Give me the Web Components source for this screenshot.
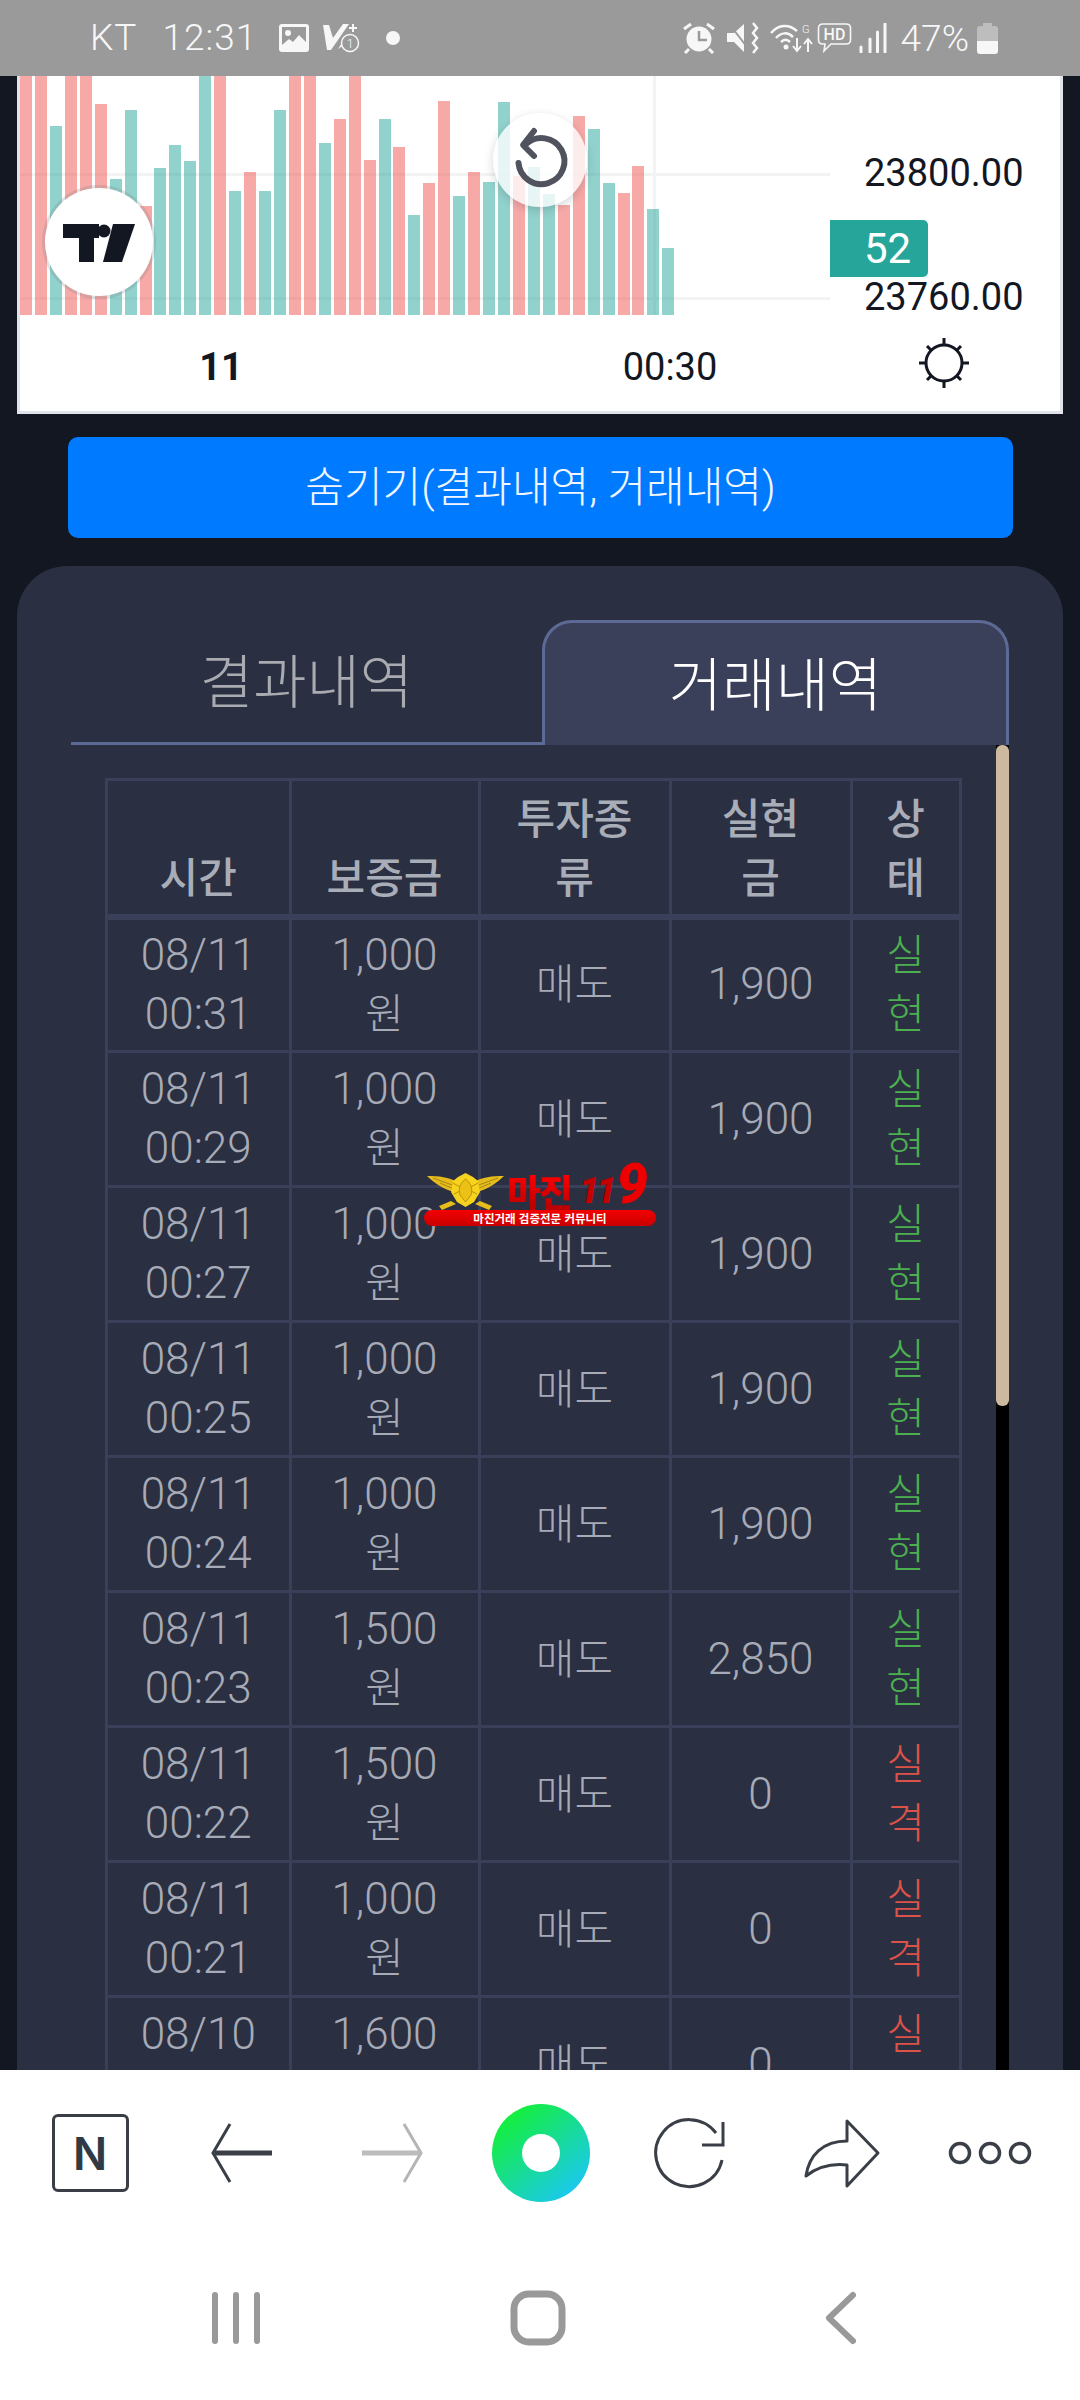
<!DOCTYPE html>
<html lang="ko">
<head>
<meta charset="utf-8">
<title>거래내역</title>
<style>
  html, body { margin: 0; padding: 0; height: 2400px; overflow: hidden; background: #131722; }
  body { font-family: Roboto, "Noto Sans CJK KR", sans-serif; }
</style>
</head>
<body>
<app-shell>
  <status-bar slot="top"></status-bar>
  <trade-chart></trade-chart>
  <hide-button>숨기기(결과내역, 거래내역)</hide-button>
  <trade-panel>
    <tab-item slot="tabs" style="flex: none; width: 471px">결과내역</tab-item>
    <tab-item slot="tabs" active>거래내역</tab-item>
    <trade-table></trade-table>
  </trade-panel>
  <site-stamp></site-stamp>
  <browser-bar slot="bottom"></browser-bar>
  <nav-bar slot="bottom"></nav-bar>
</app-shell>

<script>
const KR = `Roboto, "Noto Sans CJK KR", sans-serif`

class AppShell extends HTMLElement {
  constructor() {
    super()
    this.attachShadow({ mode: 'open' }).innerHTML = `
      <style>
        :host { display: flex; flex-direction: column; width: 1080px; height: 2400px; overflow: hidden; background: #131722; }
        main { position: relative; flex: 1; min-height: 0; overflow: hidden; display: flex; flex-direction: column; }
      </style>
      <slot name="top"></slot>
      <main><slot></slot></main>
      <slot name="bottom"></slot>`
  }
}

class StatusBar extends HTMLElement {
  constructor() {
    super()
    this.attachShadow({ mode: 'open' }).innerHTML = `
      <style>
        :host { display: flex; align-items: center; height: 76px; padding-left: 90px; padding-right: 82px; background: #9a9a9a; color: #f7f7f7;
          font: 300 37px/44px Roboto, sans-serif; box-sizing: border-box; }
        .left, .right { display: flex; align-items: center; }
        .right { margin-left: auto; }
        svg { display: block; flex: none; }
        .kt { letter-spacing: 1px; }
        .time { margin-left: 25px; letter-spacing: 1px; margin-right: 22px; }
        .pct { margin: 2px 8px 0 14px; }
      </style>
      <div class="left">
        <span class="kt">KT</span><span class="time">12:31</span>
        <svg width="30" height="28" viewBox="0 0 30 28"><rect width="30" height="28" rx="3" fill="#f7f7f7"/><rect x="3" y="3" width="24" height="20" fill="#9a9a9a"/><circle cx="9" cy="9" r="3" fill="#f7f7f7"/><path d="M3 23 L3 21 L10 15 L14 18 L20 11 L27 18 L27 23Z" fill="#f7f7f7"/></svg>
        <svg style="margin-left:14px" width="37" height="30" viewBox="0 0 37 30"><path d="M0 2H6L10 15L20 1H26L8 27H4Z" fill="#f7f7f7"/><path d="M15 26 L24 12 L24 20Z" fill="#f7f7f7"/><path d="M30 1v8M26 5h8" stroke="#f7f7f7" stroke-width="2"/><circle cx="27" cy="20" r="8.5" fill="#9a9a9a" stroke="#f7f7f7" stroke-width="1.5"/><text x="27" y="25" font-size="13" text-anchor="middle" fill="#f7f7f7" font-family="Roboto">1</text></svg>
        <svg style="margin-left:26px" width="14" height="14" viewBox="0 0 14 14"><circle cx="7" cy="7" r="7" fill="#f7f7f7"/></svg>
      </div>
      <div class="right">
        <svg width="34" height="32" viewBox="0 0 34 32"><circle cx="17" cy="17" r="12.5" fill="#f7f7f7"/><path d="M17 9v9h8" fill="none" stroke="#9a9a9a" stroke-width="2.5"/><path d="M2 7L9 2M32 7L25 2M7 27L3 31M27 27L31 31" stroke="#f7f7f7" stroke-width="3"/></svg>
        <svg style="margin-left:11px" width="32" height="32" viewBox="0 0 32 32"><path d="M0 11H7L17 2V30L7 20H0Z" fill="#f7f7f7"/><path d="M3 3L20 25" stroke="#9a9a9a" stroke-width="2"/><path d="M26 1l4 5-4 5 4 5-4 5 4 5-4 5" fill="none" stroke="#f7f7f7" stroke-width="2.5"/></svg>
        <svg style="margin-left:11px" width="43" height="32" viewBox="0 0 43 32"><path d="M1 11C9 2 19 2 27 9M6 16C11 10 18 10 23 15M11 20C14 17 17 17 20 20" fill="none" stroke="#f7f7f7" stroke-width="2.5"/><circle cx="16" cy="25" r="2.5" fill="#f7f7f7"/><text x="32" y="11" font-size="11" fill="#f7f7f7" font-family="Roboto">G</text><path d="M27 16v12m-4-4l4 5 4-5M38 30V18m-4 4l4-5 4 5" fill="none" stroke="#f7f7f7" stroke-width="2"/></svg>
        <svg style="margin-left:4px" width="35" height="32" viewBox="0 0 35 32"><path d="M6 2H29C32 2 33.500 3.500 33.500 6V18C33.500 21 32 22 29 22H14L7 29L8 22H6C3 22 1.500 21 1.500 18V6C1.500 3.500 3 2 6 2Z" fill="none" stroke="#f7f7f7" stroke-width="1.600"/><text x="17.500" y="18" font-size="16" font-weight="500" text-anchor="middle" fill="#f7f7f7" font-family="Roboto">HD</text></svg>
        <svg style="margin-left:7px" width="28" height="30" viewBox="0 0 28 30"><path d="M2 24v5M11 16v13M18.500 9v20M26 1v28" stroke="#f7f7f7" stroke-width="3" stroke-linecap="round"/></svg>
        <span class="pct">47%</span>
        <svg width="21" height="31" viewBox="0 0 21 31"><path d="M6 0H15V3H18Q21 3 21 6V18H0V6Q0 3 3 3H6Z" fill="#bdbdbd"/><path d="M0 18H21V28Q21 31 18 31H3Q0 31 0 28Z" fill="#f7f7f7"/></svg>
      </div>`
  }
}

const BARS = 'r239 r239 g189 r239 r239 r211 g136 g205 r109 g147 g170 g154 g239 r239 g124 r143 g124 g205 r239 r239 g172 r196 r239 r155 g196 r168 g100 r132 r214 g119 r143 g133 g213 r139 g148 g121 r110 r199 g186 g132 r122 r149 g106 g67'.split(' ')

class TradeChart extends HTMLElement {
  constructor() {
    super()
    const bars = BARS.map(b => `<i class="${b[0]}" style="height:${b.slice(1)}px"></i>`).join('')
    this.attachShadow({ mode: 'open' }).innerHTML = `
      <style>
        :host { display: block; flex: none; box-sizing: border-box; margin: 0 17px; width: 1046px; height: 338px; background: #fff;
          border: 3px solid #e0e3eb; border-top: 0; color: #131722; font: 400 38px/44px Roboto, sans-serif; }
        .top { display: flex; height: 239px; }
        .plot { position: relative; flex: none; width: 810px; overflow: hidden; display: flex; align-items: flex-end; gap: 2.95px; }
        .plot i { flex: none; width: 12px; position: relative; }
        .r { background: rgba(239, 83, 80, .5); }
        .g { background: rgba(38, 166, 154, .5); }
        .h, .v { position: absolute; background: #f2f3f3; }
        .h { left: 0; right: 0; height: 3px; }
        .v { top: 0; bottom: 0; left: 633px; width: 3px; }
        .logo, .reset { position: absolute; border-radius: 50%; z-index: 2; }
        .logo { left: 25px; top: 112px; width: 108px; height: 108px; background: #fff; box-shadow: 0 0 0 3px rgba(120, 123, 134, .22); }
        .reset { left: 473px; top: 37px; width: 94px; height: 94px; background: rgba(255, 255, 255, .78); box-shadow: 0 3px 10px rgba(19, 23, 34, .18); }
        .logo svg, .reset svg { display: block; }
        .axis { flex: 1; display: flex; flex-direction: column; padding-top: 75px; }
        .axis span { flex: none; padding-left: 34px; }
        .badge { flex: none; width: 98px; height: 57px; margin: 25px 0 -2px; padding-left: 34px; box-sizing: border-box; background: #26a69a; color: #fff; border-radius: 0 5px 5px 0;
          font-size: 42px; display: flex; align-items: center; }
        .time { display: grid; grid-template-columns: 402px 496px 52px; height: 96px; align-items: center; justify-items: center; }
        .time b { font-weight: 700; padding-top: 8px; }
        .time span { padding-top: 8px; }
        .time svg { display: block; }
      </style>
      <div class="top">
        <div class="plot">
          <div class="h" style="top:97px"></div>
          <div class="h" style="top:221px"></div>
          <div class="v"></div>
          ${bars}
          <div class="logo"><svg width="108" height="108" viewBox="0 0 108 108"><path d="M18 36H54V50H49V74H34V50H18Z" fill="#131722"/><circle cx="59" cy="43" r="6.500" fill="#131722"/><path d="M68 36H90L77 74H58Z" fill="#131722"/></svg></div>
          <div class="reset"><svg width="94" height="94" viewBox="0 0 94 94"><path d="M33 31A23 23 0 1 1 25.500 50" fill="none" stroke="#50535e" stroke-width="6" stroke-linecap="round"/><path d="M41 18L30 32L41 43" fill="none" stroke="#50535e" stroke-width="6" stroke-linecap="round" stroke-linejoin="round"/></svg></div>
        </div>
        <div class="axis">
          <span>23800.00</span>
          <div class="badge">52</div>
          <span>23760.00</span>
        </div>
      </div>
      <div class="time">
        <b>11</b>
        <span>00:30</span>
        <svg width="50" height="52" viewBox="0 0 50 52"><circle cx="25" cy="26" r="18" fill="none" stroke="#131722" stroke-width="3"/><path d="M25 1v7M25 44v7M0 26h7M43 26h7M8 9l5 5M42 9l-5 5M8 43l5-5M42 43l-5-5" stroke="#131722" stroke-width="3"/></svg>
      </div>`
  }
}

class HideButton extends HTMLElement {
  constructor() {
    super()
    this.attachShadow({ mode: 'open' }).innerHTML = `
      <style>
        :host { display: flex; flex: none; align-items: center; justify-content: center; box-sizing: border-box; width: 945px; height: 101px; margin: 23px 0 0 68px;
          background: #007bff; color: #f2f7ff; border-radius: 10px; font: 300 42px/56px ${KR}; }
      </style>
      <slot></slot>`
  }
}

class TabItem extends HTMLElement {
  constructor() {
    super()
    this.attachShadow({ mode: 'open' }).innerHTML = `
      <style>
        :host { display: flex; flex: 1; align-items: center; justify-content: center; box-sizing: border-box; height: 125px; padding-top: 3px; color: #a9abb1;
          font: 300 58px/70px ${KR}; border-bottom: 3px solid #5c6a95; }
        :host([active]) { color: #fff; background: #3a4059; border: 3px solid #5c6a95; border-bottom: 0; border-radius: 30px 30px 0 0; }
      </style>
      <slot></slot>`
  }
}

class TradePanel extends HTMLElement {
  constructor() {
    super()
    this.attachShadow({ mode: 'open' }).innerHTML = `
      <style>
        :host { display: block; flex: none; box-sizing: border-box; width: 1046px; margin: 28px 0 0 17px; padding: 54px 54px 0 54px; background: #2a2f41; border-radius: 50px 50px 0 0; }
        .tabs { display: flex; }
        .body { display: flex; align-items: stretch; }
        .content { padding: 33px 0 0 34px; }
        .rail { margin-left: auto; width: 13px; flex: none; background: #000; }
        .thumb { height: 661px; background: #cdb9a0; border-radius: 6px; }
      </style>
      <div class="tabs"><slot name="tabs"></slot></div>
      <div class="body">
        <div class="content"><slot></slot></div>
        <div class="rail"><div class="thumb"></div></div>
      </div>`
  }
}

const ROWS = [
  ['08/11', '00:31', '1,000', '1,900', 'win'],
  ['08/11', '00:29', '1,000', '1,900', 'win'],
  ['08/11', '00:27', '1,000', '1,900', 'win'],
  ['08/11', '00:25', '1,000', '1,900', 'win'],
  ['08/11', '00:24', '1,000', '1,900', 'win'],
  ['08/11', '00:23', '1,500', '2,850', 'win'],
  ['08/11', '00:22', '1,500', '0', 'lose'],
  ['08/11', '00:21', '1,000', '0', 'lose'],
  ['08/10', '&nbsp;', '1,600', '0', 'lose']
]

class TradeTable extends HTMLElement {
  constructor() {
    super()
    const rows = ROWS.map(([date, time, amount, result, state]) => `
      <tr>
        <td>${date}<br>${time}</td>
        <td>${amount}<br><span class="kr">원</span></td>
        <td class="kr">매도</td>
        <td>${result}</td>
        <td class="kr ${state}">${state == 'win' ? '실<br>현' : '실<br>격'}</td>
      </tr>`).join('')
    this.attachShadow({ mode: 'open' }).innerHTML = `
      <style>
        :host { display: block; width: 856px; }
        table { border-collapse: collapse; table-layout: fixed; width: 856px; color: #a6abb7; font: 300 44px/59px ${KR}; text-align: center; }
        th, td { border: 3px solid #3a4059; padding: 6px 0; }
        th { font: 500 42px/59px ${KR}; vertical-align: bottom; border-bottom-width: 6px; color: #a8adb8; }
        td { vertical-align: middle; }
        thead tr { height: 137px; }
        tbody tr { height: 135px; }
        .kr { font-size: 42px; }
        .win { color: #4caf50; }
        .lose { color: #dc5248; }
      </style>
      <table>
        <colgroup><col style="width:183.500px"><col style="width:189px"><col style="width:191px"><col style="width:181px"><col style="width:109px"></colgroup>
        <thead><tr><th>시간</th><th>보증금</th><th>투자종<br>류</th><th>실현<br>금</th><th>상<br>태</th></tr></thead>
        <tbody>${rows}</tbody>
      </table>`
  }
}

class SiteStamp extends HTMLElement {
  constructor() {
    super()
    this.attachShadow({ mode: 'open' }).innerHTML = `
      <style>
        :host { position: absolute; left: 424px; top: 1097px; width: 232px; display: block; font-family: "Noto Sans CJK KR", sans-serif; }
        .top { display: flex; align-items: flex-end; height: 37px; }
        svg { display: block; flex: none; margin-left: 3px; }
        .name { margin-left: 3px; font: 900 37px/37px "Noto Sans CJK KR", sans-serif; letter-spacing: -2px; background: linear-gradient(#ff0000, #b80000); -webkit-background-clip: text; background-clip: text; color: transparent; }
        .num { margin-left: 8px; font: italic 900 56px/37px Roboto, sans-serif; color: #ee0000; letter-spacing: -1px; white-space: nowrap; }
        .num small { font-size: 36px; color: #c40000; letter-spacing: -3px; margin-right: 3px; }
        .bar { height: 16px; background: linear-gradient(#f40000, #c80000); border-radius: 8px; color: #fff; font: 700 11.500px/16px "Noto Sans CJK KR", sans-serif; text-align: center; white-space: nowrap; }
      </style>
      <div class="top">
        <svg width="77" height="37" viewBox="0 0 77 37">
          <path d="M0 3C12 3 22 4 30 9L27 19C16 16 7 10 0 3ZM77 3C65 3 55 4 47 9L50 19C61 16 70 10 77 3Z" fill="#e6bb1c"/>
          <path d="M6 5L28 13M13 10L27 16M71 5L49 13M64 10L50 16" stroke="#a98612" stroke-width="1"/>
          <path d="M38.500 0L46 4L51 8L53 19L47 29L38.500 34L30 29L24 19L26 8L31 4Z" fill="#f7d31e"/>
          <path d="M38.500 6C44 10 46 16 44 22L38.500 29L33 22C31 16 33 10 38.500 6Z" fill="#edc016" stroke="#b8920f" stroke-width="1"/>
          <path d="M26 10L33 14M51 10L44 14M27 21L33 18M50 21L44 18" stroke="#b8920f" stroke-width="1"/>
          <path d="M24 28L12 33L15 37L29 31ZM53 28L65 33L62 37L48 31Z" fill="#e6bb1c"/>
        </svg>
        <span class="name">마진</span>
        <span class="num"><small>11</small>9</span>
      </div>
      <div class="bar">마진거래 검증전문 커뮤니티</div>`
  }
}

class BrowserBar extends HTMLElement {
  constructor() {
    super()
    const ink = '#3a3f47'
    this.attachShadow({ mode: 'open' }).innerHTML = `
      <style>
        :host { display: grid; flex: none; grid-template-columns: repeat(7, 150px); box-sizing: border-box; height: 166px; padding-left: 16px; background: #fff; align-items: center; justify-items: center; }
        svg { display: block; }
        .n { box-sizing: border-box; width: 77px; height: 78px; margin-right: 2px; border: 3.500px solid ${ink}; border-radius: 6px; display: flex; align-items: center; justify-content: center;
          color: #2f3a44; font: 600 45px/1 Inter, Roboto, sans-serif; }
      </style>
      <div class="n">N</div>
      <svg width="100" height="100" viewBox="0 0 100 100"><path d="M39 21L22 50L39 79" fill="none" stroke="${ink}" stroke-width="3"/><path d="M24 50H81" stroke="${ink}" stroke-width="5"/></svg>
      <svg width="100" height="100" viewBox="0 0 100 100"><path d="M63 21L80 50L63 79" fill="none" stroke="#b5b5b5" stroke-width="3"/><path d="M78 50H21" stroke="#bcbcbc" stroke-width="5"/></svg>
      <svg width="100" height="100" viewBox="0 0 100 100"><defs><linearGradient id="ring" x1="0.150" y1="0.100" x2="0.850" y2="0.900"><stop offset="0" stop-color="#14f038"/><stop offset="1" stop-color="#1bc8f0"/></linearGradient></defs><circle cx="50" cy="50" r="49" fill="url(#ring)"/><circle cx="50" cy="50" r="19" fill="#fff"/></svg>
      <svg width="100" height="100" viewBox="0 0 100 100"><path d="M75 30A33.500 33.500 0 1 0 81 57" fill="none" stroke="${ink}" stroke-width="3"/><path d="M82 19V42H61" fill="none" stroke="${ink}" stroke-width="3"/></svg>
      <svg width="100" height="100" viewBox="0 0 100 100"><path d="M56 18L87 50L56 83V62C38 60 24 66 15 73C18 52 32 38 56 38Z" fill="none" stroke="${ink}" stroke-width="3" stroke-linejoin="round"/></svg>
      <svg width="100" height="100" viewBox="0 0 100 100"><g fill="none" stroke="${ink}" stroke-width="3.500"><circle cx="19" cy="50" r="9.500"/><circle cx="49" cy="50" r="9.500"/><circle cx="79" cy="50" r="9.500"/></g></svg>`
  }
}

class NavBar extends HTMLElement {
  constructor() {
    super()
    this.attachShadow({ mode: 'open' }).innerHTML = `
      <style>
        :host { display: grid; flex: none; grid-template-columns: repeat(3, 302px); box-sizing: border-box; height: 164px; padding-left: 85px; background: #fff; align-items: center; justify-items: center; }
        svg { display: block; }
      </style>
      <svg width="60" height="60" viewBox="0 0 60 60"><path d="M9 7V53M30 7V53M51 7V53" stroke="#999" stroke-width="6" stroke-linecap="round"/></svg>
      <svg width="60" height="60" viewBox="0 0 60 60"><rect x="6" y="6" width="48" height="48" rx="15" fill="none" stroke="#999" stroke-width="7"/></svg>
      <svg width="60" height="60" viewBox="0 0 60 60"><path d="M43 7L19 30L43 53" fill="none" stroke="#999" stroke-width="6" stroke-linecap="round" stroke-linejoin="round"/></svg>`
  }
}

customElements.define('app-shell', AppShell)
customElements.define('status-bar', StatusBar)
customElements.define('trade-chart', TradeChart)
customElements.define('hide-button', HideButton)
customElements.define('tab-item', TabItem)
customElements.define('trade-panel', TradePanel)
customElements.define('trade-table', TradeTable)
customElements.define('site-stamp', SiteStamp)
customElements.define('browser-bar', BrowserBar)
customElements.define('nav-bar', NavBar)
</script>
</body>
</html>
